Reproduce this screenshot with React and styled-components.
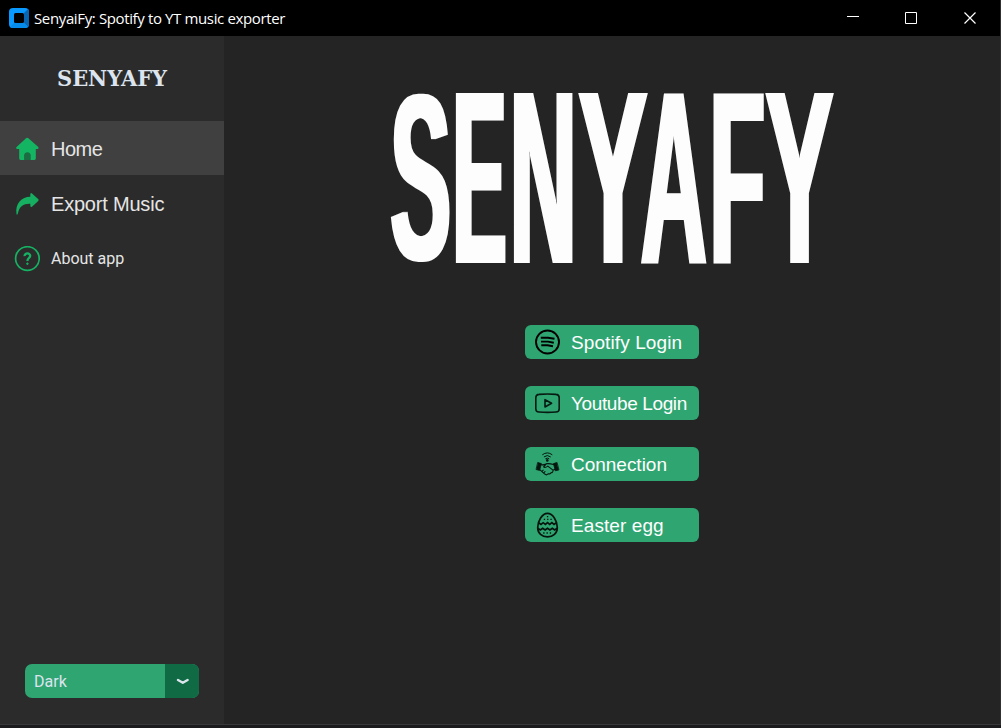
import React from "react";
import styled, { createGlobalStyle } from "styled-components";

const Global = createGlobalStyle`
  * { box-sizing: border-box; }
  body { margin: 0; background: #1b1b1d; overflow: hidden; }
  svg { display: block; flex: none; }
  button { border: 0; margin: 0; padding: 0; background: none; text-align: left; }
`;

const Window = styled.div`
  width: 1001px;
  height: 725px;
  display: flex;
  flex-direction: column;
  background: #242424;
  border-right: 1px solid #303030;
  border-bottom: 1px solid #38383a;
`;

const TitleBar = styled.header`
  height: 36px;
  flex: none;
  display: flex;
  align-items: center;
  padding: 0 1px 0 9px;
  background: #000;
`;

const Title = styled.span`
  flex: 1;
  margin-left: 5px;
  color: #fff;
  font: 15px/20px "Open Sans", "Noto Sans", sans-serif;
  letter-spacing: -0.37px;
  white-space: nowrap;
  padding-bottom: 1px;
`;

const WindowButton = styled.button`
  width: ${(p) => p.$width || 58}px;
  height: 36px;
  display: flex;
  align-items: center;
  justify-content: center;
`;

const Body = styled.div`
  flex: 1;
  display: flex;
  min-height: 0;
`;

const Sidebar = styled.aside`
  width: 224px;
  flex: none;
  display: flex;
  flex-direction: column;
  background: #2b2b2b;
`;

const Brand = styled.div`
  height: 85px;
  padding: 25px 0 0 53px;
`;

const NavItem = styled.button`
  width: 224px;
  height: ${(p) => (p.$active ? 54 : 55)}px;
  display: flex;
  align-items: center;
  gap: 11px;
  padding: 2px 0 0 14px;
  color: #e5e5e5;
  background: ${(p) => (p.$active ? "#404040" : "transparent")};
  font: ${(p) => (p.$small ? '16px/20px Roboto' : '20px/24px "Liberation Sans"')}, sans-serif;
  letter-spacing: ${(p) => p.$track || 0}px;
`;

const ThemeSelect = styled.div`
  width: 174px;
  height: 34px;
  margin: auto 0 26px 25px;
  display: flex;
  border-radius: 7px;
  overflow: hidden;
  background: #2fa572;
`;

const ThemeValue = styled.span`
  flex: 1;
  padding-left: 9px;
  color: #dce4ee;
  font: 16px/35px Roboto, sans-serif;
`;

const ThemeArrow = styled.span`
  width: 34px;
  display: flex;
  align-items: center;
  justify-content: center;
  background: #106a43;
`;

const Main = styled.main`
  flex: 1;
  display: flex;
  flex-direction: column;
  align-items: center;
  padding-top: 1px;
`;

const Actions = styled.div`
  display: flex;
  flex-direction: column;
  gap: 27px;
  margin-top: 4px;
`;

const ActionButton = styled.button`
  width: 174px;
  height: 34px;
  display: flex;
  align-items: center;
  gap: 11px;
  padding-left: 10px;
  border-radius: 6px;
  color: #fff;
  background: #2fa572;
  font: 19px/32px "Liberation Sans", sans-serif;
  letter-spacing: ${(p) => p.$track || 0}px;
  white-space: nowrap;
`;

const ActionLabel = styled.span`
  padding-top: 1px;
`;

const AppIcon = () => (
  <svg width="20" height="20" viewBox="0 0 20 20">
    <rect width="20" height="20" rx="4" fill="#0a99ff" />
    <path d="M15 5 19 1Q20 2 20 4V16Q20 18 19 19L15 15Z" fill="#0867b5" />
    <path d="M5 15H15L19 19Q18 20 16 20H4Q2 20 1 19Z" fill="#078bea" />
    <rect x="5" y="5" width="10" height="10" rx="1.5" fill="#000" />
  </svg>
);

const HomeIcon = () => (
  <svg width="26" height="26" viewBox="0 0 26 26">
    <path
      d="M12 2.2Q13.2 1.2 14.4 2.2L24.3 11Q25 12 24 12.9H21.8V22.6Q21.8 24 20.4 24H6.6Q5.2 24 5.2 22.6V12.9H3Q1.5 12.6 2.3 11.3Z"
      fill="#14b562"
    />
    <path d="M10.1 24V19.2C10.1 15.2 16.7 15.2 16.7 19.2V24Z" fill="#1c6b43" />
  </svg>
);

const ShareIcon = () => (
  <svg width="26" height="26" viewBox="0 0 26 26">
    <path
      d="M2.5 23.2C.9 12.3 7.6 5.7 16.3 5.7V3Q16.8 1.6 18 2.4L24.4 8.2Q25 9.1 24.2 9.9L18 15.8Q16.7 16.5 16.3 15.1V12.8C9.8 12.5 5.4 15 3.8 22.8Q3 24.3 2.5 23.2Z"
      fill="#16ae60"
    />
  </svg>
);

const HelpIcon = () => (
  <svg width="26" height="26" viewBox="0 0 26 26" fill="none" stroke="#16b163">
    <circle cx="13.4" cy="12.5" r="11.8" strokeWidth="1.7" />
    <path d="M10.6 10.1C10.5 6.5 16.3 6.6 16.2 9.9C16.1 12 13.4 12.2 13.4 15" strokeWidth="2.3" />
    <circle cx="13.4" cy="17.7" r=".8" strokeWidth="1" fill="#16b163" />
  </svg>
);

const SpotifyIcon = () => (
  <svg width="25" height="26" viewBox="0 0 25 26" fill="none" stroke="#000" strokeWidth="1.9">
    <circle cx="12.5" cy="13" r="11.5" />
    <path d="M5.8 8.7H13L19.5 9.7M6 12.6H13L18.8 13.7M6.3 16.3H12.5L18 17.3" />
  </svg>
);

const YoutubeIcon = () => (
  <svg width="25" height="26" viewBox="0 0 25 26" fill="none" stroke="#061b12" strokeWidth="1.6" strokeLinejoin="round">
    <path d="M4 4.4Q12.5 3.6 21 4.4Q24.2 4.6 24.2 7.7V18.7Q24.2 22 21 22Q12.5 22.8 4 22Q.8 22 .8 18.7V7.7Q.8 4.6 4 4.4Z" />
    <path d="M10 9.7V17L16.6 13.3Z" />
  </svg>
);

const ConnectionIcon = () => (
  <svg width="25" height="26" viewBox="0 0 25 26" fill="none" stroke="#05170f" strokeLinecap="round" strokeLinejoin="round">
    <path d="M7.6 3.6Q12.3 0 17 3.6M9.2 5.7Q12.3 3.2 15.4 5.7M10.7 7.6Q12.3 6.4 13.9 7.6" strokeWidth="1" />
    <circle cx="12.3" cy="9.4" r="1.3" fill="#05170f" stroke="none" />
    <path d="M3 11.6 6.4 12.6 4.6 19.4 1.4 18.6ZM21.7 11.6 18.4 12.6 20.4 19.8 23.6 19Z" fill="#05170f" strokeWidth=".8" />
    <path
      d="M6.2 13.8Q8.6 14.2 11.6 12.7Q15 12.4 18.5 13.6M11.6 12.7 8.6 15.9Q10 17.2 12.8 15.1L18 19.1Q19.4 18.7 20 18.1M5 18.8 9.8 23.1 11.5 23.9 13.4 22.7Q15.7 23.3 15.8 21.7Q18.2 21.7 18 19.1M6.9 20.5 8.2 19.1M8.7 22.1 10 20.5"
      strokeWidth="1.1"
    />
  </svg>
);

const EggIcon = () => (
  <svg width="25" height="26" viewBox="0 0 25 26" fill="none" stroke="#04140d">
    <path d="M12.5 1.4C17.8 1.4 22.3 9 22.3 15.4C22.3 21.5 18 24.9 12.5 24.9S2.7 21.5 2.7 15.4C2.7 9 7.2 1.4 12.5 1.4Z" strokeWidth="1.7" />
    <path
      d="M3.6 10.7 6 12.4 8.2 10.7 10.4 12.4 12.5 10.7 14.7 12.4 16.9 10.7 19 12.4 21.4 10.7M2.8 16.2 5.3 18 7.7 16.2 10.1 18 12.5 16.2 14.9 18 17.3 16.2 19.7 18 22.2 16.2"
      strokeWidth="1.7"
    />
    <path d="M8.8 7.4H17M11.9 4.6H14M8.2 21H18" strokeWidth="1.3" strokeDasharray="1.3 2" />
  </svg>
);

const actions = [
  { label: "Spotify Login", Icon: SpotifyIcon, track: 0.1 },
  { label: "Youtube Login", Icon: YoutubeIcon, track: -0.38 },
  { label: "Connection", Icon: ConnectionIcon, track: -0.02 },
  { label: "Easter egg", Icon: EggIcon, track: 0.08 },
];

// Condensed wordmark: each letter has its own start and advance.
const wordmark = [
  { char: "S", x: 975.5, width: 152, y: 260.3, size: 238 },
  { char: "E", x: 1131.5, width: 135 },
  { char: "N", x: 1274.5, width: 167 },
  { char: "Y", x: 1446, width: 172.5 },
  { char: "A", x: 1602, width: 165 },
  { char: "F", x: 1773.5, width: 139 },
  { char: "Y", x: 1914, width: 170 },
];

const Wordmark = () => (
  <svg width="460" height="284" viewBox="382 37 460 284">
    <defs>
      <filter id="widen" filterUnits="userSpaceOnUse" x="382" y="37" width="460" height="284">
        <feMorphology operator="dilate" radius="2 0" />
      </filter>
    </defs>
    <g filter="url(#widen)">
      <text transform="scale(.4 1)" fill="#fdfdfd" fontFamily="Liberation Sans, sans-serif" fontWeight="700">
        {wordmark.map(({ char, x, width, y = 263, size = 247 }) => (
          <tspan key={x} x={x} y={y} fontSize={size} textLength={width} lengthAdjust="spacingAndGlyphs">
            {char}
          </tspan>
        ))}
      </text>
    </g>
  </svg>
);

export default function App() {
  return (
    <>
      <Global />
      <Window>
        <TitleBar>
          <AppIcon />
          <Title>SenyaiFy: Spotify to YT music exporter</Title>
          <WindowButton aria-label="Minimize">
            <svg width="12" height="12"><path d="M0 4.5H12" stroke="#fff" /></svg>
          </WindowButton>
          <WindowButton aria-label="Maximize">
            <svg width="12" height="12"><path d="M.5.5H11.5V11.5H.5Z" fill="none" stroke="#fff" /></svg>
          </WindowButton>
          <WindowButton aria-label="Close" $width={59}>
            <svg width="12" height="12"><path d="M.5.5 11.5 11.5M11.5.5.5 11.5" stroke="#fff" strokeWidth="1.2" /></svg>
          </WindowButton>
        </TitleBar>
        <Body>
          <Sidebar>
            <Brand>
              <svg width="120" height="32" viewBox="0 0 120 32">
                <text x="4" y="25" fill="#dce4ee" fontFamily="DejaVu Serif, serif" fontWeight="700" fontSize="22" textLength="110" lengthAdjust="spacingAndGlyphs">
                  SENYAFY
                </text>
              </svg>
            </Brand>
            <NavItem $active $track={-0.5}><HomeIcon />Home</NavItem>
            <NavItem $track={-0.2}><ShareIcon />Export Music</NavItem>
            <NavItem $small><HelpIcon />About app</NavItem>
            <ThemeSelect>
              <ThemeValue>Dark</ThemeValue>
              <ThemeArrow>
                <svg width="14" height="8" viewBox="0 0 14 8">
                  <path d="M3 3 7.8 5.7 12.6 3" fill="none" stroke="#dce4ee" strokeWidth="2.4" strokeLinecap="round" strokeLinejoin="round" />
                </svg>
              </ThemeArrow>
            </ThemeSelect>
          </Sidebar>
          <Main>
            <Wordmark />
            <Actions>
              {actions.map(({ label, Icon, track }) => (
                <ActionButton key={label} $track={track}>
                  <Icon />
                  <ActionLabel>{label}</ActionLabel>
                </ActionButton>
              ))}
            </Actions>
          </Main>
        </Body>
      </Window>
    </>
  );
}
